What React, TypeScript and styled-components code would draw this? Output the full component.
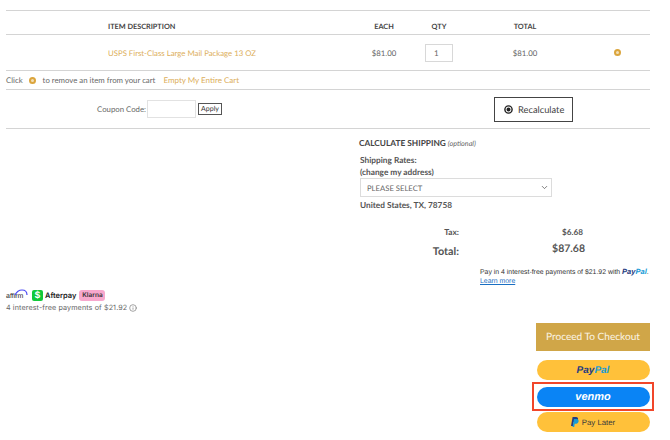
import styled, { createGlobalStyle } from "styled-components";
import { ChevronDown, Info } from "lucide-react";

const GlobalStyle = createGlobalStyle`
  html, body {
    margin: 0;
    padding: 0;
    background: #fff;
  }
  body {
    font-family: Lato, "Open Sans", sans-serif;
    color: #555;
    text-rendering: geometricPrecision;
  }
`;

const Page = styled.div`
  width: 670px;
  height: 440px;
  overflow: hidden;
  padding: 10px 20px 0 6px;
  box-sizing: border-box;
`;

const columns = "349px 58px 52px 120px 65px";

const HeadRow = styled.div`
  display: grid;
  grid-template-columns: ${columns};
  align-items: center;
  height: 25px;
  padding-top: 7px;
  box-sizing: border-box;
  border-top: 1px solid #d4d4d4;
  border-bottom: 1px solid #d4d4d4;
  font-size: 7.3px;
  font-weight: 700;
  color: #444;
`;

const ItemRow = styled.div`
  display: grid;
  grid-template-columns: ${columns};
  align-items: center;
  height: 35px;
  border-bottom: 1px solid #d4d4d4;
  font-size: 7.8px;
  color: #666;
`;

const Cell = styled.div<{ $left?: boolean }>`
  text-align: ${(p) => (p.$left ? "left" : "center")};
  padding-left: ${(p) => (p.$left ? "102px" : "0")};
  display: ${(p) => (p.$left ? "block" : "flex")};
  justify-content: center;
`;

const GoldLink = styled.a`
  color: #dcae5a;
  font-size: 7.8px;
  white-space: nowrap;
`;

const QtyBox = styled.div`
  width: 28px;
  height: 18px;
  border: 1px solid #d8d8d8;
  padding-left: 8px;
  box-sizing: border-box;
  font-size: 8px;
  line-height: 16px;
  text-align: left;
  color: #666;
`;

const RemoveDot = styled.span`
  display: inline-block;
  width: 7px;
  height: 7px;
  box-sizing: border-box;
  border: 2px solid #dba53d;
  border-radius: 50%;
  background: #f3dfb8;
`;

const ClickRow = styled.div`
  display: flex;
  align-items: center;
  height: 18px;
  border-bottom: 1px solid #d4d4d4;
  font-size: 7.8px;
  color: #666;
`;

const ClickDot = styled(RemoveDot)`
  margin: 0 7px 0 6px;
`;

const EmptyLink = styled(GoldLink)`
  margin-left: 8px;
  font-size: 8px;
`;

const CouponRow = styled.div`
  display: flex;
  align-items: center;
  height: 38px;
  border-bottom: 1px solid #d4d4d4;
  padding-left: 91px;
  font-size: 7.8px;
  color: #666;
`;

const CouponInput = styled.div`
  width: 49px;
  height: 18px;
  border: 1px solid #e2e2e2;
  box-sizing: border-box;
  margin-left: 1px;
`;

const ApplyButton = styled.button`
  height: 12px;
  width: 24px;
  margin-left: 2px;
  padding: 0;
  background: #fff;
  border: 1px solid #555;
  font-family: inherit;
  font-size: 7px;
  color: #333;
  text-rendering: geometricPrecision;
`;

const RecalcButton = styled.button`
  display: flex;
  align-items: center;
  gap: 5px;
  margin-left: 272px;
  width: 79px;
  height: 25px;
  padding: 0 0 0 9px;
  box-sizing: border-box;
  background: #fff;
  border: 1px solid #444;
  font-family: inherit;
  font-size: 9.3px;
  color: #444;
  text-rendering: geometricPrecision;
`;

const ShippingBlock = styled.div`
  margin-left: 353px;
  padding-top: 8px;
  width: 291px;
`;

const ShippingTitle = styled.div`
  font-size: 8.3px;
  font-weight: 700;
  color: #444;
  line-height: 12px;

  em {
    font-size: 7.2px;
    font-weight: 400;
    color: #666;
  }
`;

const ShippingLabel = styled.div`
  margin: 4px 0 0 1px;
  font-size: 8.3px;
  font-weight: 700;
  color: #555;
  line-height: 12px;
`;

const SelectBox = styled.div`
  display: flex;
  align-items: center;
  justify-content: space-between;
  margin-left: 1px;
  width: 192px;
  height: 19px;
  padding: 0 2px 0 6px;
  box-sizing: border-box;
  border: 1px solid #dcdcdc;
  font-size: 7.7px;
  color: #666;
`;

const Address = styled.div`
  margin: 2px 0 0 1px;
  font-size: 8.3px;
  font-weight: 700;
  color: #555;
  line-height: 12px;
`;

const Summary = styled.div`
  display: grid;
  grid-template-columns: 100px 126px;
  align-items: center;
  font-weight: 700;
  color: #555;
  margin-top: 15px;
  row-gap: 3px;
`;

const SummaryLabel = styled.div<{ $big?: boolean }>`
  text-align: right;
  font-size: ${(p) => (p.$big ? "10.8px" : "8.3px")};
  line-height: ${(p) => (p.$big ? "15px" : "12px")};
  padding-top: ${(p) => (p.$big ? "3px" : "0")};
`;

const SummaryValue = styled.div<{ $big?: boolean }>`
  text-align: right;
  font-size: ${(p) => (p.$big ? "10.5px" : "8.2px")};
  line-height: ${(p) => (p.$big ? "15px" : "12px")};
  padding-bottom: ${(p) => (p.$big ? "2px" : "0")};
  padding-right: ${(p) => (p.$big ? "0" : "2px")};
`;

const PayMessage = styled.div`
  margin: 8px 0 0 121px;
  width: 190px;
  font-family: "Liberation Sans", Arial, sans-serif;
  font-size: 6.9px;
  line-height: 9px;
  color: #333;
  white-space: nowrap;

  a {
    color: #1a6fc2;
    text-decoration: underline;
  }
`;

const PayWord = styled.span<{ $light?: boolean }>`
  font-size: 7.5px;
  font-weight: 700;
  font-style: italic;
  color: ${(p) => (p.$light ? "#179bd7" : "#253b80")};
`;

const BottomRow = styled.div`
  display: flex;
  justify-content: space-between;
  align-items: flex-start;
  width: 644px;
`;

const BnplBlock = styled.div`
  padding-top: 3px;
  font-family: Inter, "Liberation Sans", sans-serif;
`;

const BnplLogos = styled.div`
  display: flex;
  align-items: center;
  height: 12px;
`;

const AffirmMark = styled.div`
  position: relative;
  width: 22px;
  font-family: "Liberation Sans", sans-serif;
  font-size: 7px;
  line-height: 8px;
  color: #222;
  padding-top: 3px;

  svg {
    position: absolute;
    top: -1px;
    right: 0;
  }
`;

const CashTile = styled.div`
  width: 11px;
  height: 11px;
  margin-left: 4px;
  border-radius: 2px;
  background: #12c93a;
  color: #fff;
  font-size: 9px;
  font-weight: 700;
  line-height: 11px;
  text-align: center;
`;

const AfterpayName = styled.span`
  margin-left: 2px;
  font-size: 7.5px;
  font-weight: 600;
  color: #222;
`;

const KlarnaTag = styled.span`
  margin-left: 3px;
  width: 26px;
  height: 11px;
  border-radius: 3px;
  background: #f7a8cd;
  font-size: 6.5px;
  font-weight: 600;
  line-height: 11px;
  text-align: center;
  color: #333;
`;

const BnplText = styled.div`
  display: flex;
  align-items: center;
  gap: 2px;
  margin-top: 2px;
  font-size: 7.2px;
  letter-spacing: 0.1px;
  color: #666;
`;

const ButtonColumn = styled.div`
  display: flex;
  flex-direction: column;
  align-items: center;
  width: 122px;
  margin-right: -4px;
  padding-top: 37px;
`;

const CheckoutButton = styled.button`
  width: 114px;
  height: 28px;
  margin-bottom: 9px;
  padding: 0;
  border: 0;
  background: #d0a648;
  color: #fbf5e6;
  font-family: inherit;
  font-size: 10.1px;
  text-rendering: geometricPrecision;
`;

const PillButton = styled.button<{ $venmo?: boolean }>`
  display: flex;
  flex-shrink: 0;
  align-items: center;
  justify-content: center;
  gap: 3px;
  width: 113px;
  height: 20px;
  padding: 0;
  border: 0;
  border-radius: 10px;
  background: ${(p) => (p.$venmo ? "#0a84f5" : "#ffc13a")};
  text-rendering: geometricPrecision;
`;

const PaypalText = styled.span`
  font-family: "Liberation Sans", sans-serif;
  font-size: 10px;
  font-weight: 700;
  font-style: italic;
  color: #253b80;

  b {
    color: #179bd7;
  }
`;

const VenmoText = styled.span`
  font-family: "Liberation Sans", sans-serif;
  font-size: 11px;
  font-weight: 700;
  font-style: italic;
  color: #fff;
`;

const LaterText = styled.span`
  font-family: "Liberation Sans", sans-serif;
  font-size: 7.8px;
  color: #3b3b3b;
`;

const VenmoFrame = styled.div`
  display: flex;
  justify-content: center;
  align-items: center;
  width: 122px;
  height: 29px;
  flex-shrink: 0;
  box-sizing: border-box;
  border: 2.5px solid #f1462a;
  margin: 2px 0 1px;
`;

const PaypalGlyph = () => (
  <svg width="8" height="10" viewBox="0 0 8 10">
    <path d="M1.6 0H5c1.6 0 2.4 1 2 2.5C6.6 4.3 5.3 5 3.8 5H2.6L2 9H0z" fill="#253b80" />
    <path d="M3 2h2.6c1.4 0 2.3 1 2 2.4C7.2 6 6 6.8 4.6 6.8H3.7L3.2 10H1.5z" fill="#179bd7" />
  </svg>
);

const RecalcIcon = () => (
  <svg width="9" height="9" viewBox="0 0 10 10">
    <circle cx="5" cy="5" r="4" fill="none" stroke="#222" strokeWidth="1.6" />
    <circle cx="5" cy="5" r="2.2" fill="#222" />
  </svg>
);

export default function App() {
  return (
    <Page>
      <GlobalStyle />
      <HeadRow>
        <Cell $left>ITEM DESCRIPTION</Cell>
        <Cell>EACH</Cell>
        <Cell>QTY</Cell>
        <Cell>TOTAL</Cell>
        <Cell />
      </HeadRow>
      <ItemRow>
        <Cell $left>
          <GoldLink>USPS First-Class Large Mail Package 13 OZ</GoldLink>
        </Cell>
        <Cell>$81.00</Cell>
        <Cell>
          <QtyBox>1</QtyBox>
        </Cell>
        <Cell>$81.00</Cell>
        <Cell>
          <RemoveDot />
        </Cell>
      </ItemRow>
      <ClickRow>
        Click
        <ClickDot />
        to remove an item from your cart
        <EmptyLink>Empty My Entire Cart</EmptyLink>
      </ClickRow>
      <CouponRow>
        Coupon Code:
        <CouponInput />
        <ApplyButton>Apply</ApplyButton>
        <RecalcButton>
          <RecalcIcon />
          Recalculate
        </RecalcButton>
      </CouponRow>
      <ShippingBlock>
        <ShippingTitle>
          CALCULATE SHIPPING <em>(optional)</em>
        </ShippingTitle>
        <ShippingLabel>
          Shipping Rates:
          <br />
          (change my address)
        </ShippingLabel>
        <SelectBox>
          PLEASE SELECT
          <ChevronDown size={9} color="#555" />
        </SelectBox>
        <Address>United States, TX, 78758</Address>
        <Summary>
          <SummaryLabel>Tax:</SummaryLabel>
          <SummaryValue>$6.68</SummaryValue>
          <SummaryLabel $big>Total:</SummaryLabel>
          <SummaryValue $big>$87.68</SummaryValue>
        </Summary>
        <PayMessage>
          Pay in 4 interest-free payments of $21.92 with <PayWord>Pay</PayWord>
          <PayWord $light>Pal</PayWord>.
          <br />
          <a>Learn more</a>
        </PayMessage>
      </ShippingBlock>
      <BottomRow>
        <BnplBlock>
          <BnplLogos>
            <AffirmMark>
              <svg width="14" height="7" viewBox="0 0 14 7">
                <path d="M1 6C3 2 6 1 8 1c3 0 5 2 5 5" fill="none" stroke="#4a4af4" strokeWidth="1.2" />
              </svg>
              affirm
            </AffirmMark>
            <CashTile>$</CashTile>
            <AfterpayName>Afterpay</AfterpayName>
            <KlarnaTag>Klarna</KlarnaTag>
          </BnplLogos>
          <BnplText>
            4 interest-free payments of $21.92
            <Info size={8} color="#777" />
          </BnplText>
        </BnplBlock>
        <ButtonColumn>
          <CheckoutButton>Proceed To Checkout</CheckoutButton>
          <PillButton>
            <PaypalText>
              Pay<b>Pal</b>
            </PaypalText>
          </PillButton>
          <VenmoFrame>
            <PillButton $venmo>
              <VenmoText>venmo</VenmoText>
            </PillButton>
          </VenmoFrame>
          <PillButton>
            <PaypalGlyph />
            <LaterText>Pay Later</LaterText>
          </PillButton>
        </ButtonColumn>
      </BottomRow>
    </Page>
  );
}
